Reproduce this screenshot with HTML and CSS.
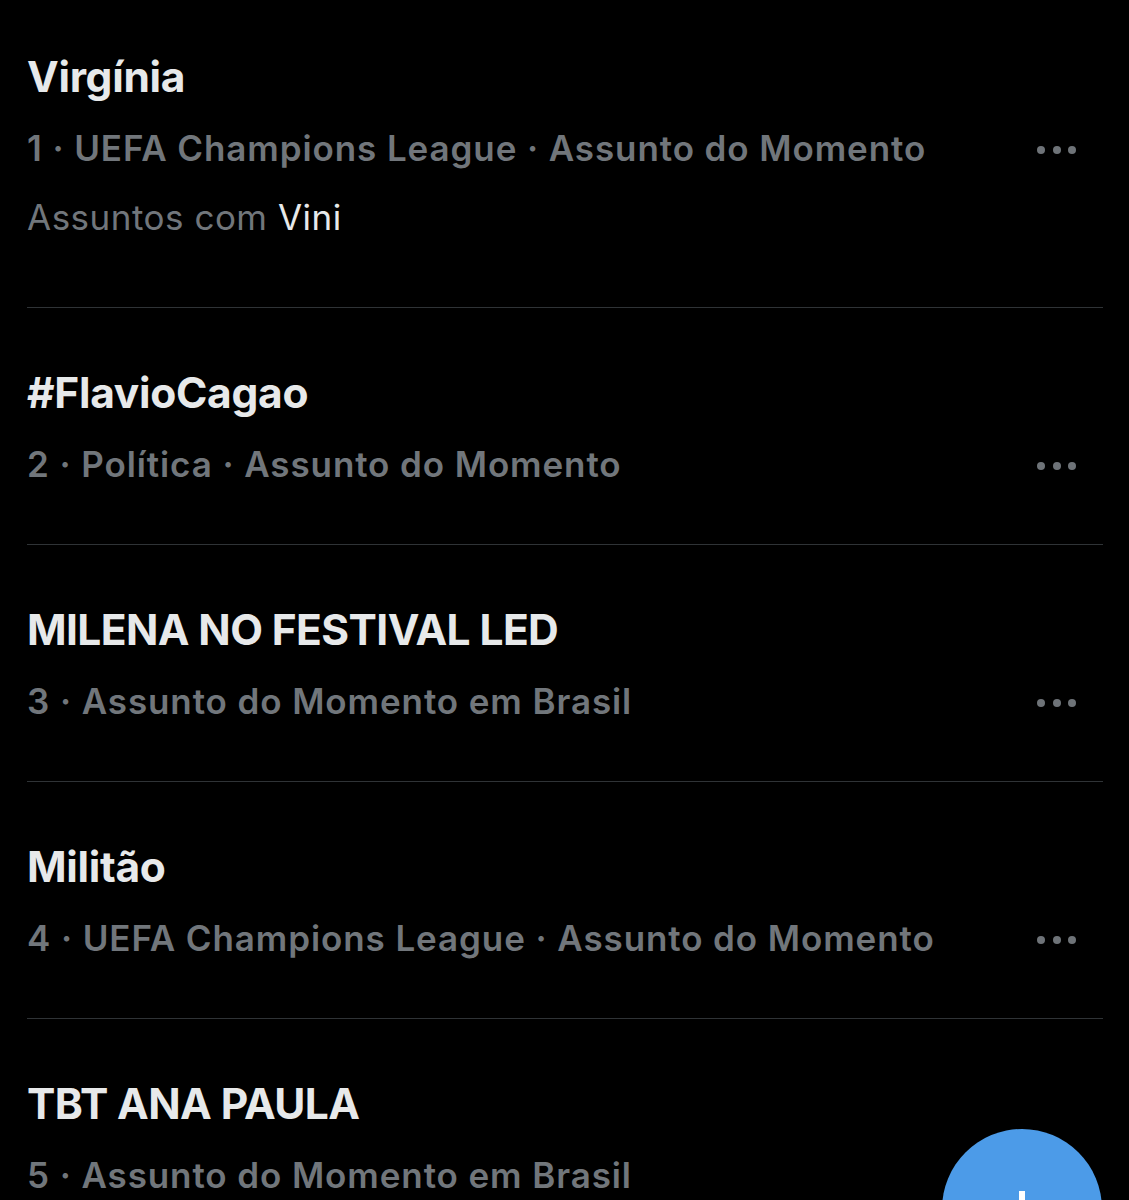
FILE: index.html
```html
<!DOCTYPE html>
<html lang="pt-BR">

<head>
    <meta charset="UTF-8">
    <meta name="viewport" content="width=device-width, initial-scale=1.0">
    <title>Assuntos do Momento</title>
    <link rel="stylesheet" href="styles.css">
</head>

<body>
    <main class="trends">
        <div class="trend first">
            <h2 class="trend-name">Virgínia</h2>
            <div class="trend-row">
                <p class="trend-meta">1 · UEFA Champions League · Assunto do Momento</p>
                <button class="more" aria-label="Mais"><i></i><i></i><i></i></button>
            </div>
            <p class="trend-with">Assuntos com <span>Vini</span></p>
        </div>

        <div class="trend">
            <h2 class="trend-name">#FlavioCagao</h2>
            <div class="trend-row">
                <p class="trend-meta">2 · Política · Assunto do Momento</p>
                <button class="more" aria-label="Mais"><i></i><i></i><i></i></button>
            </div>
        </div>

        <div class="trend">
            <h2 class="trend-name tight">MILENA NO FESTIVAL LED</h2>
            <div class="trend-row">
                <p class="trend-meta">3 · Assunto do Momento em Brasil</p>
                <button class="more" aria-label="Mais"><i></i><i></i><i></i></button>
            </div>
        </div>

        <div class="trend">
            <h2 class="trend-name">Militão</h2>
            <div class="trend-row">
                <p class="trend-meta">4 · UEFA Champions League · Assunto do Momento</p>
                <button class="more" aria-label="Mais"><i></i><i></i><i></i></button>
            </div>
        </div>

        <div class="trend">
            <h2 class="trend-name tight">TBT ANA PAULA</h2>
            <div class="trend-row">
                <p class="trend-meta">5 · Assunto do Momento em Brasil</p>
                <button class="more" aria-label="Mais"><i></i><i></i><i></i></button>
            </div>
        </div>
    </main>

    <!-- floating compose button -->
    <button class="compose" aria-label="Postar">
        <svg viewBox="0 0 40 40" width="40" height="40">
            <path d="M20 4v32M4 20h32" stroke="#fff" stroke-width="6" fill="none" />
        </svg>
    </button>
</body>

</html>
```

FILE: styles.css
```css
body {
    font-family: Inter, "Noto Sans", sans-serif;
    margin: 0;
    padding: 0;
    background-color: #000;
    color: #e7e9ea;
    overflow: hidden;
    height: 1200px;
}

.trends {
    margin: 0 26px 0 27px;
}

.trend {
    border-bottom: 1px solid #2f3336;
    padding: 61px 0 59px;
}

.trend.first {
    padding: 53px 0 69px;
}

.trend-name {
    margin: 0;
    font-size: 42.5px;
    font-weight: 700;
    line-height: 48px;
    letter-spacing: -0.3px;
}

.trend-name.tight {
    letter-spacing: -0.6px;
}

.trend-row {
    display: flex;
    align-items: center;
    justify-content: space-between;
    margin-top: 26px;
}

.trend-meta {
    margin: 0;
    font-size: 35px;
    font-weight: 600;
    line-height: 42px;
    letter-spacing: 0.9px;
    color: #71767b;
}

.trend-with {
    margin: 27px 0 0;
    font-size: 35px;
    line-height: 42px;
    letter-spacing: 0.5px;
    color: #71767b;
}

.trend-with span {
    color: #e7e9ea;
}

.more {
    display: flex;
    gap: 7.5px;
    background: none;
    border: none;
    padding: 0;
    margin: 4px 27px 0 0;
}

.more i {
    width: 8px;
    height: 8px;
    border-radius: 50%;
    background: #6e7378;
}

.compose {
    position: absolute;
    left: 942px;
    top: 1129px;
    width: 160px;
    height: 160px;
    border-radius: 50%;
    border: none;
    background: #4c9be8;
    padding: 0;
    display: flex;
    justify-content: center;
    padding-top: 58px;
}
```
